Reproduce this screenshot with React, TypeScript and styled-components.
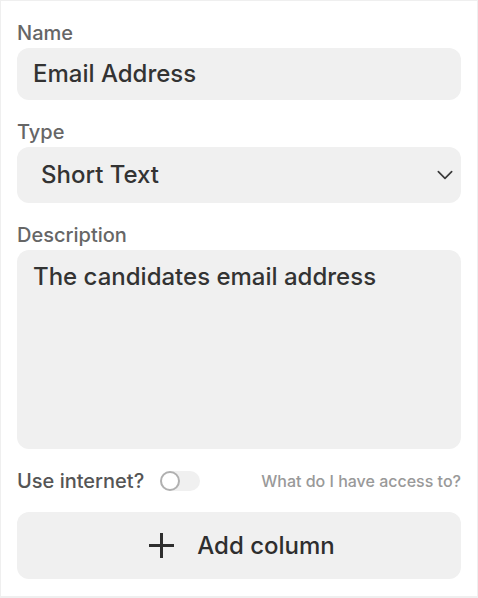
import React from 'react'
import styled, { createGlobalStyle } from 'styled-components'

const GlobalStyle = createGlobalStyle`
    html, body {
        margin: 0;
        padding: 0;
        background: #efefef;
    }
    * {
        box-sizing: border-box;
    }
`

const Panel = styled.div`
    width: 476px;
    height: 595px;
    margin: 1px 1px 2px 1px;
    background: #ffffff;
    padding: 20px 16px 16px 16px;
    display: flex;
    flex-direction: column;
    font-family: Inter, 'Noto Sans', sans-serif;
`

const Field = styled.div`
    display: flex;
    flex-direction: column;
    gap: 3px;
    margin-bottom: 20px;
`

const Label = styled.label`
    font-size: 20px;
    line-height: 24px;
    font-weight: 500;
    color: #666666;
`

const TextBox = styled.div<{ $height: number; $padX: number; $top?: boolean }>`
    height: ${(p) => p.$height}px;
    background: #f0f0f0;
    border-radius: 12px;
    padding: ${(p) => (p.$top ? '11px' : '0')} ${(p) => p.$padX}px 0 ${(p) => p.$padX}px;
    display: flex;
    align-items: ${(p) => (p.$top ? 'flex-start' : 'center')};
    justify-content: space-between;
    font-size: 24px;
    line-height: 32px;
    font-weight: 500;
    color: #333333;
`

const Chevron = styled.svg`
    width: 20px;
    height: 20px;
    margin-right: -18px;
    color: #3a3a3a;
`

const OptionRow = styled.div`
    display: flex;
    align-items: center;
    gap: 16px;
    height: 24px;
    margin-bottom: 19px;
`

const OptionLabel = styled.span`
    font-size: 20px;
    font-weight: 500;
    color: #555555;
`

const Toggle = styled.div`
    width: 40px;
    height: 20px;
    border-radius: 10px;
    background: #f0f0f0;
    display: flex;
    align-items: center;
`

const Knob = styled.div`
    width: 20px;
    height: 20px;
    border-radius: 50%;
    background: #ffffff;
    border: 2px solid #b0b0b0;
`

const HelpLink = styled.span`
    margin-left: auto;
    font-size: 16px;
    font-weight: 500;
    color: #999999;
`

const AddButton = styled.button`
    height: 67px;
    border: none;
    border-radius: 12px;
    background: #f0f0f0;
    padding: 0 0 0 6px;
    display: flex;
    align-items: center;
    justify-content: center;
    gap: 23px;
    font-family: Inter, 'Noto Sans', sans-serif;
    font-size: 24px;
    font-weight: 500;
    color: #2e2e2e;
`

export default function App() {
    return (
        <>
            <GlobalStyle />
            <Panel>
                <Field>
                    <Label>Name</Label>
                    <TextBox $height={52} $padX={16}>Email Address</TextBox>
                </Field>
                <Field>
                    <Label>Type</Label>
                    <TextBox $height={56} $padX={24}>
                        Short Text
                        <Chevron viewBox="0 0 24 24" fill="none" stroke="currentColor" strokeWidth="2" strokeLinecap="round" strokeLinejoin="round">
                            <path d="M4 8l8 8 8-8" />
                        </Chevron>
                    </TextBox>
                </Field>
                <Field>
                    <Label>Description</Label>
                    <TextBox $height={199} $padX={16} $top>The candidates email address</TextBox>
                </Field>
                <OptionRow>
                    <OptionLabel>Use internet?</OptionLabel>
                    <Toggle>
                        <Knob />
                    </Toggle>
                    <HelpLink>What do I have access to?</HelpLink>
                </OptionRow>
                <AddButton>
                    <svg width="25" height="25" viewBox="0 0 25 25" stroke="#2e2e2e" strokeWidth="3">
                        <path d="M12.5 0v25M0 12.5h25" />
                    </svg>
                    Add column
                </AddButton>
            </Panel>
        </>
    )
}
